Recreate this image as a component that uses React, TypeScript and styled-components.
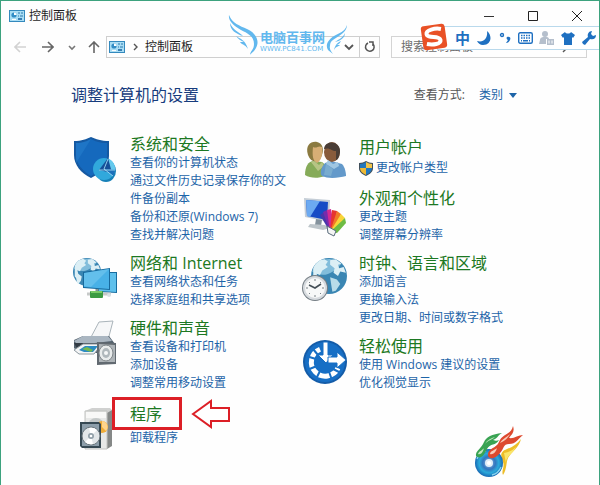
import React from "react";
import styled, { createGlobalStyle } from "styled-components";

const GlobalStyle = createGlobalStyle`
  * { box-sizing: border-box; }
  body {
    margin: 0;
    background: #fff;
    font-family: "Open Sans", "Noto Sans CJK SC", sans-serif;
    font-size: 12px;
    line-height: 18px;
    color: #1f1f1f;
  }
  button, input, select {
    font: inherit;
    color: inherit;
    background: none;
    border: 0;
    padding: 0;
    margin: 0;
  }
  svg { display: block; flex: none; }
`;

const Window = styled.main`
  position: relative;
  min-height: 100vh;
  overflow: hidden;
  background: #fefefe;
  border: solid #3da27e;
  border-width: 1px 1px 0;
`;

const TitleBar = styled.header`
  display: flex;
  align-items: center;
  height: 29px;
  padding-left: 8px;
`;

const WindowTitle = styled.span`
  flex: 1;
  margin-left: 4px;
`;

const WindowButton = styled.button`
  display: grid;
  place-items: center;
  width: 44px;
  height: 28px;
`;

const Toolbar = styled.nav`
  display: flex;
  align-items: center;
  height: 34px;
  padding: 0 12px 0 13px;
`;

const NavButton = styled.button<{ $gap?: number }>`
  display: grid;
  place-items: center;
  height: 20px;
  margin-right: ${(p) => p.$gap ?? 0}px;
`;

const AddressBar = styled.div`
  display: flex;
  align-items: center;
  flex: 1 1 274px;
  height: 22px;
  padding-left: 2px;
  border: 1px solid #cfcfcf;
`;

const Crumb = styled.button`
  flex: 1;
  text-align: left;
`;

const AddressButton = styled.button<{ $divided?: boolean }>`
  display: grid;
  place-items: center;
  width: 20px;
  height: 20px;
  border-left: ${(p) => (p.$divided ? "1px solid #cfcfcf" : "0")};
`;

const SearchBox = styled.label`
  display: flex;
  align-items: center;
  flex: 1 1 196px;
  min-width: 0;
  height: 22px;
  margin-left: 11px;
  padding: 0 12px 0 9px;
  border: 1px solid #d4d4d4;
`;

const SearchInput = styled.input`
  flex: 1;
  min-width: 0;
  outline: none;
  &::placeholder { color: #6d6d6d; opacity: 1; }
`;

const Content = styled.section`
  padding: 19px 70px 20px;
`;

const HeadingRow = styled.div`
  display: flex;
  align-items: center;
  justify-content: space-between;
  height: 24px;
  padding-right: 12px;
  margin-bottom: 28px;
`;

const PageHeading = styled.h1`
  margin: 0;
  font-size: 16px;
  font-weight: 400;
  color: #173c7d;
`;

const ViewBy = styled.div`
  display: flex;
  align-items: center;
  color: #555;
`;

const ViewSelect = styled.select`
  appearance: none;
  margin: 0 5px 0 14px;
  color: #1d64a8;
`;

const Columns = styled.div`
  display: grid;
  grid-template-columns: 1fr 1fr;
`;

const Column = styled.div<{ $top?: number }>`
  display: flex;
  flex-direction: column;
  gap: 10px;
  padding-top: ${(p) => p.$top ?? 0}px;
`;

const Group = styled.article`
  display: flex;
  align-items: flex-start;
  gap: 10px;
  padding: 0 12px 0 1px;
`;

const GroupBody = styled.div`
  flex: 1;
  min-width: 0;
`;

const GroupTitle = styled.h2<{ $marked?: boolean }>`
  position: relative;
  margin: 0;
  padding: ${(p) => (p.$marked ? "3px 0 5px" : "0")};
  font-size: 16px;
  font-weight: 400;
  line-height: 19px;
`;

const TitleLink = styled.a`
  color: #1c7822;
  text-decoration: none;
`;

const Tasks = styled.ul`
  margin: 0;
  padding: 0;
  list-style: none;
`;

const Task = styled.li<{ $shield?: boolean }>`
  display: flex;
  align-items: center;
  gap: 3px;
  min-height: ${(p) => (p.$shield ? 22 : 18)}px;
`;

const TaskLink = styled.a`
  color: #1d64a8;
  text-decoration: none;
`;

const Highlight = styled.span`
  position: absolute;
  left: -18px;
  top: -5px;
  width: 70px;
  height: 33px;
  border: 3px solid #dc1f26;
  pointer-events: none;
`;

const Pointer = styled.span`
  position: absolute;
  left: 61px;
  top: -4px;
`;

const Watermark = styled.div`
  position: absolute;
  left: 226px;
  top: 13px;
  display: flex;
  color: #62b8ee;
  pointer-events: none;
`;

const WatermarkText = styled.div`
  margin-top: 16px;
  width: 66px;
`;

const WatermarkName = styled.div`
  font-size: 13px;
  font-weight: 700;
  line-height: 15px;
  white-space: nowrap;
`;

const WatermarkUrl = styled.div`
  font-family: "DejaVu Sans", sans-serif;
  font-size: 7px;
  line-height: 8px;
  white-space: nowrap;
`;

const WatermarkWing = styled.div`
  margin-top: 10px;
`;

const ImeBar = styled.div`
  position: absolute;
  top: 25px;
  right: -1px;
  display: flex;
  align-items: center;
  height: 24px;
  padding: 0 1px 0 14px;
  background: #fff;
  border: 1px solid #b9d9ec;
  border-right: 0;
`;

const ImeLogo = styled.span`
  position: absolute;
  left: -18px;
  top: -4px;
`;

const ImeButton = styled.button`
  display: grid;
  place-items: center;
  width: 21px;
  height: 22px;
  color: #1f70c1;
  font-size: 15px;
  font-weight: 700;
  line-height: 22px;
`;

const FlameLogo = styled.div`
  position: absolute;
  right: 75px;
  bottom: 7px;
`;

const PanelIcon = () => (
  <svg width="16" height="12" viewBox="0 0 16 12">
    <rect width="16" height="12" fill="#3489bd" />
    <rect x="1" y="1" width="14" height="10" fill="#a9ddf4" />
    <circle cx="5" cy="5" r="2.6" fill="#338dc5" />
    <path d="M5 5V2.4A2.6 2.6 0 0 1 7.6 5z" fill="#fff" />
    <path d="M9 3h2M12 3h2M9 6h1M11 6h3" stroke="#2b78ad" />
    <path d="M3 9.5h4" stroke="#fff" />
    <rect x="9" y="8" width="4" height="2" fill="#387eb2" />
  </svg>
);

const Arrow = ({ d, color, w = 12 }: { d: string; color: string; w?: number }) => (
  <svg width={w} height="12" viewBox={`0 0 ${w} 12`} fill="none" stroke={color} strokeWidth="1.6">
    <path d={d} />
  </svg>
);

const ShieldIcon = () => (
  <svg width="48" height="48" viewBox="0 0 48 48">
    <path d="M2 6c8 0 12-2 17-4 5 2 10 4 18 4v15c0 10-8 17-18 22C9 38 2 30 2 20z" fill="#1559a2" />
    <path d="M4 8c7 0 11-2 15-4 4 2 8 4 16 4v13c0 9-7 15-16 20C11 36 4 29 4 20z" fill="#1569bd" />
    <path d="M4 8c7 0 11-2 15-4L4 28z" fill="#2781d0" opacity=".5" />
    <ellipse cx="34" cy="36" rx="10" ry="11" fill="#1680b7" />
    <circle cx="32" cy="34" r="11" fill="#31a8dc" />
    <path d="M32 34l5-10a11 11 0 0 1 6 10z" fill="#65c9ed" />
    <path d="M27 35l9-12 4 15z" fill="#164f99" />
    <path d="M32 34l11 1a11 11 0 0 1-2 6z" fill="#1d70ba" />
    <path d="M32 34l4-10M27 35l16 0M32 34l9 7" stroke="#b4e8fb" strokeWidth=".8" />
  </svg>
);

const Globe = ({ cx, cy, r }: { cx: number; cy: number; r: number }) => (
  <g transform={`translate(${cx} ${cy}) scale(${r / 16})`}>
    <circle r="16" fill="#3a86b3" />
    <path d="M-15-4A16 16 0 0 1 11-11C3-2-4 2-15-4z" fill="#82bddb" />
    <path d="M-14-7c2-5 6-8 10-8l3 2-2 3 2 2-5 3-2 4-3-1 1 4 4 3-1 5-3 4c-3-4-1-7-4-9zM1-14l5-1 5 4-3 1 1 3 4-1 2 5-5-1-2 4-4-3 1-4-4-3z" fill="#dceff5" />
    <path d="M1 1l6 2 3 4-4 6-3 1-1-6z" fill="#b9dce9" />
  </g>
);

const NetworkIcon = () => (
  <svg width="48" height="48" viewBox="0 0 48 48">
    <Globe cx={15} cy={18} r={14} />
    <path d="M26 18l19 0v21l-19-1z" fill="#176c9f" />
    <path d="M27 19l17 0v19l-17-1z" fill="#5ec0ec" />
    <path d="M11 18l27-4v22l-27-2z" fill="#17699d" />
    <path d="M12 19l25-4v20l-25-2z" fill="#48b1e7" />
    <path d="M12 19l25-4-18 18-7-1z" fill="#7acbf1" opacity=".55" />
    <path d="M15 40h24" stroke="#c6c9c8" strokeWidth="3" />
    <path d="M25 35v3" stroke="#839696" strokeWidth="3" />
    <rect x="18" y="37" width="13" height="7" rx="1" fill="#3b9b42" />
    <path d="M19 38h11" stroke="#8fda75" strokeWidth="1.5" />
    <circle cx="37" cy="41" r="2" fill="#d8e0e4" />
  </svg>
);

const HardwareIcon = () => (
  <svg width="48" height="48" viewBox="0 0 48 48">
    <path d="M18 20l9-17 14-1-5 19z" fill="#f6f7f8" stroke="#aab4ba" />
    <path d="M2 21l9-4h26l6 8v9H7l-5-5z" fill="#53616d" />
    <path d="M2 22l9-5h25l4 5-34 4z" fill="#aab6c1" />
    <path d="M2 24h39v7H6z" fill="#323b44" />
    <path d="M2 31l9-6h19l-8 10H7z" fill="#f4f5f6" stroke="#8c989f" />
    <path d="M7 31l6-4h13l-5 6h-9z" fill="#2c8bc2" />
    <path d="M10 30l5-2 6 3-2 2z" fill="#75b94e" />
    <path d="M25 23l19 1v21l-19 1z" fill="#616970" />
    <path d="M27 25l16 1v17H27z" fill="#aeb4b8" />
    <ellipse cx="34" cy="34" rx="7" ry="8" fill="#e9ecec" stroke="#7c8387" />
    <ellipse cx="34" cy="34" rx="4" ry="5" fill="#b0b8bc" />
    <circle cx="34" cy="34" r="2" fill="#f7f8f8" />
  </svg>
);

const ProgramsIcon = () => (
  <svg width="48" height="48" viewBox="0 0 48 48">
    <path d="M13 9l7-3h18l2 2-5 4z" fill="#d0d1d0" />
    <path d="M35 11l5-3v36l-5 3z" fill="#858887" />
    <path d="M13 9h22v38H13z" fill="#e7e8e7" stroke="#c1c2c0" />
    <path d="M14 10h20v6H14z" fill="#f8f8f7" />
    <circle cx="24" cy="24" r="8" fill="#c4c8c8" />
    <circle cx="30" cy="25" r="6" fill="#efac38" />
    <path d="M30 19a6 6 0 0 1 4 10l-4-4z" fill="#ffd58d" />
    <path d="M8 20h19l2 2v24H10l-2-2z" fill="#374953" />
    <path d="M10 22h17v22H10z" fill="#8d9eaa" />
    <circle cx="19" cy="34" r="9" fill="#e3e7e9" stroke="#6b767c" />
    <path d="M19 34l-2-8a9 9 0 0 1 8 2zM19 34l2 8a9 9 0 0 1-8-2z" fill="#fff" />
    <circle cx="19" cy="34" r="3" fill="#919fa8" />
    <circle cx="19" cy="34" r="1.3" fill="#fff" />
  </svg>
);

const UsersIcon = () => (
  <svg width="48" height="40" viewBox="0 0 48 40">
    <path d="M4 37c0-8 3-14 9-14l8 1 6 5-3 9c-8 3-15 2-20-1z" fill="#86ab59" />
    <path d="M7 17C4 7 10 3 16 4c6 1 7 8 5 13-2 7-10 10-14 0z" fill="#8b7a40" />
    <path d="M12 9c4 2 5-2 9 0 1 8-1 14-5 16-4-2-5-7-4-16z" fill="#d7ae75" />
    <path d="M13 23l5 4 3-3 2 4-6 5-7-9z" fill="#b6c485" />
    <path d="M21 38c-3-3 0-10 3-13l6-2 11 3c3 3 4 9 4 12-7 2-18 3-24 0z" fill="#6399ca" />
    <ellipse cx="31" cy="14" rx="8" ry="10" fill="#885b3b" />
    <path d="M23 11C24 1 40 3 39 14c-1 7-3 8-4 8v-9c-5 0-6-4-12-2z" fill="#4a3d35" />
    <path d="M27 22l5 4 5-2 1 4-5 3-8-5z" fill="#9fc6e2" />
    <path d="M25 26l7 5-2 7-7-1z" fill="#79accf" />
  </svg>
);

const AppearanceIcon = () => (
  <svg width="48" height="48" viewBox="0 0 48 48">
    <path d="M3 9l26 2-1 22-24-5z" fill="#c5ced7" />
    <path d="M5 11l22 2-1 18-20-4z" fill="#174bc5" />
    <path d="M5 11l14 1-10 16-3-1z" fill="#6caaf1" />
    <path d="M15 30l6 1-1 6-6-1z" fill="#84929d" />
    <path d="M9 35l15 1 5 3-7 2-15-3z" fill="#bdc5ca" />
    <path d="M29 43l-10-17 4-3 11 17z" fill="#4736aa" />
    <path d="M29 43l-7-20 4-2 9 20z" fill="#762bac" />
    <path d="M29 43l-3-22 4-1 4 22z" fill="#d22a93" />
    <path d="M29 43l2-22 5 1-2 21z" fill="#e6352f" />
    <path d="M29 43l7-21 4 3-5 18z" fill="#f17927" />
    <path d="M29 43l11-18 4 4-8 14z" fill="#f8d538" />
    <path d="M29 43l15-14 1 5-9 10z" fill="#6ebc44" />
    <path d="M26 37l9 5-2 5-6-3z" fill="#f5f5f4" stroke="#596b7c" />
  </svg>
);

const ClockIcon = () => (
  <svg width="48" height="48" viewBox="0 0 48 48">
    <Globe cx={28} cy={22} r={18} />
    <circle cx="14" cy="34" r="13" fill="#747d84" />
    <circle cx="14" cy="34" r="12" fill="#d6dade" />
    <circle cx="14" cy="34" r="10" fill="#f7f8f8" />
    <path d="M14 25v2M14 41v2M5 34h2M21 34h2M8 28l1 1M20 28l-1 1M8 40l1-1M20 40l-1-1" stroke="#788187" />
    <path d="M8 31l6 3 6-4" fill="none" stroke="#444e56" strokeWidth="1.6" />
  </svg>
);

const EaseIcon = () => (
  <svg width="48" height="48" viewBox="0 0 48 48">
    <circle cx="24" cy="25" r="22" fill="#145ca8" />
    <circle cx="24" cy="25" r="20" fill="#176fc5" />
    <path d="M19 12.200a14 14 0 1 0 18 19" fill="none" stroke="#fff" strokeWidth="5" />
    <path d="M5 19l10 3M6 33l10-4M15 42l5-10M31 43l-4-11M40 36l-8-4M12 12l5 6" stroke="#176fc5" strokeWidth="2" />
    <path d="M22 5h5v13h5l-7 8-8-8h5z" fill="#fff" stroke="#176fc5" />
    <path d="M27 20h9v-5l9 8-9 8v-5h-9z" fill="#fff" stroke="#176fc5" />
  </svg>
);

const UacShield = () => (
  <svg width="14" height="15" viewBox="0 0 14 15">
    <path d="M0 2c3 0 5-1 7-2 2 1 4 2 7 2v5c0 4-3 6-7 8-4-2-7-4-7-8z" fill="#3f4e5a" />
    <path d="M1 3c2 0 4-1 6-2v6H1z" fill="#2277be" />
    <path d="M7 1c2 1 4 2 6 2v4H7z" fill="#f2c449" />
    <path d="M1 7h6v7C3 12 1 10 1 7z" fill="#edb935" />
    <path d="M7 7h6c0 3-2 5-6 7z" fill="#2277be" />
  </svg>
);

const LeftWing = () => (
  <svg width="33" height="42" viewBox="0 0 33 42" fill="currentColor">
    <path d="M2 1c3 8 11 11 18 14 9 4 13 12 9 19-2 4-5 5-6 7 0-4 4-5 4-11 0-8-7-11-13-14C7 12 1 7 2 1z" />
    <path d="M3 9c3 7 9 9 13 13C9 20 3 16 3 9zM9 22c4 3 9 3 12 13-3-5-6-4-8-7h4c-3-1-6-3-8-6z" />
  </svg>
);

const RightWing = () => (
  <svg width="23" height="32" viewBox="0 0 23 32" fill="currentColor">
    <path d="M21 1c-2 7-8 8-13 11-6 4-9 9-6 14l5 4c-1-2-4-4-3-8 0-6 5-7 9-10 5-3 8-7 8-11z" />
    <path d="M19 9c-2 5-6 6-10 9 5-1 10-4 10-9zM15 17c-3 1-6 4-7 9 2-4 4-3 6-5h-3c2-1 3-2 4-4z" />
  </svg>
);

const SogouLogo = () => (
  <svg width="28" height="28" viewBox="0 0 28 28">
    <g transform="rotate(-8 14 14)">
      <rect x="2" y="2" width="24" height="24" rx="3" fill="#e95126" />
      <path d="M22 7C16 5 7 6 7 10c0 5 13 3 13 8 0 4-8 4-14 2" fill="none" stroke="#fff" strokeWidth="4" />
    </g>
  </svg>
);

const MoonIcon = () => (
  <svg width="14" height="14" viewBox="0 0 14 14">
    <path d="M10 0c6 5 4 14-4 14-3 0-5-2-6-4 7 2 11-3 10-10z" fill="currentColor" />
  </svg>
);
const PunctuationIcon = () => (
  <svg width="12" height="12" viewBox="0 0 12 12">
    <circle cx="3" cy="3" r="1.5" fill="none" stroke="currentColor" strokeWidth="1.4" />
    <path d="M8 5c3-1 4 1 3 3-1 2-2 3-4 3l2-3c-1 0-2-2-1-3z" fill="currentColor" />
  </svg>
);
const KeyboardIcon = () => (
  <svg width="15" height="12" viewBox="0 0 15 12" fill="none" stroke="currentColor">
    <rect x=".7" y=".7" width="13.6" height="10.6" rx="1.5" strokeWidth="1.4" />
    <path d="M3 3.500h10M3 6h10" strokeWidth="1.4" strokeDasharray="1.5 1" />
    <path d="M3 8.700h1M5 8.700h5M11 8.700h1" strokeWidth="1.4" />
  </svg>
);
const PersonIcon = () => (
  <svg width="15" height="15" viewBox="0 0 15 15" fill="#b5bfcc">
    <circle cx="6" cy="3" r="3" />
    <path d="M1 9c0-4 9-4 9-1H7v5H0z" />
    <path d="M8 8h7v6H8z" />
    <path d="M9.500 9.500h1v3h-1zM12.500 9.500h1v3h-1z" fill="#fff" />
  </svg>
);
const ShirtIcon = () => (
  <svg width="14" height="13" viewBox="0 0 14 13">
    <path d="M4 0c1 2 5 2 6 0l4 3-2 3-1-1v8H3V5L2 6 0 3z" fill="currentColor" />
  </svg>
);
const WrenchIcon = () => (
  <svg width="14" height="14" viewBox="0 0 14 14">
    <path d="M10 0L9 3l2 2 3-1c0 4-3 5-6 4l-5 6-2-1-1-2 6-5C5 3 7 0 10 0z" fill="currentColor" />
  </svg>
);

const FlameDisc = () => (
  <svg width="50" height="52" viewBox="0 0 50 52">
    <defs>
      <radialGradient id="disc">
        <stop offset="0" stopColor="#9fc6ec" />
        <stop offset=".45" stopColor="#3275be" />
        <stop offset=".7" stopColor="#2baadb" />
        <stop offset="1" stopColor="#1769b4" />
      </radialGradient>
    </defs>
    <path d="M47 13c-2 9-9 12-13 19-2 4-1 11-5 17-2-4 2-8 0-13-2-5-4-10 4-13 6-2 10-5 14-10z" fill="#edbd28" />
    <path d="M30 27c6-1 9-3 12-6-4 8-10 9-10 16z" fill="#fae66b" />
    <circle cx="15" cy="37" r="14" fill="url(#disc)" />
    <path d="M3 33a13 13 0 0 1 9-8M27 41a13 13 0 0 1-9 8" fill="none" stroke="#88d3ed" strokeWidth="1.3" />
    <circle cx="15" cy="37" r="4" fill="#e0edf7" />
    <circle cx="15" cy="37" r="2" fill="#fff" />
    <path d="M2 30C1 25 8 22 10 16c2-5 8-8 18-9-5 3-4 5-9 7 3 1 4 1 6 0-3 6-9 3-12 9-3 6-6 11-11 7z" fill="#39a353" />
    <path d="M4 28c1-3 5-4 6-6-1 4-3 7-6 6zM11 18c2-4 6-6 10-7-3 3-7 3-10 7z" fill="#c4e8c0" />
    <path d="M14 30c-1-8 8-7 11-14 3-8 12-7 14-16 2 6-1 8-4 12 5 1 9-3 14-3-5 4-7 9-14 9-6 0-5 5-9 9-3 4-9 8-12 3z" fill="#dd492e" />
    <path d="M16 28c0-3 5-4 7-6-1 4-4 7-7 6zM26 17c2-4 6-5 10-9-2 4-5 7-10 9z" fill="#f8cbb8" />
  </svg>
);

type GroupData = {
  title: string;
  icon: React.ReactNode;
  tasks: string[];
  shield?: boolean;
  marked?: boolean;
};

const leftGroups: GroupData[] = [
  { title: "系统和安全", icon: <ShieldIcon />, tasks: ["查看你的计算机状态", "通过文件历史记录保存你的文件备份副本", "备份和还原(Windows 7)", "查找并解决问题"] },
  { title: "网络和 Internet", icon: <NetworkIcon />, tasks: ["查看网络状态和任务", "选择家庭组和共享选项"] },
  { title: "硬件和声音", icon: <HardwareIcon />, tasks: ["查看设备和打印机", "添加设备", "调整常用移动设置"] },
  { title: "程序", icon: <ProgramsIcon />, tasks: ["卸载程序"], marked: true },
];

const rightGroups: GroupData[] = [
  { title: "用户帐户", icon: <UsersIcon />, tasks: ["更改帐户类型"], shield: true },
  { title: "外观和个性化", icon: <AppearanceIcon />, tasks: ["更改主题", "调整屏幕分辨率"] },
  { title: "时钟、语言和区域", icon: <ClockIcon />, tasks: ["添加语言", "更换输入法", "更改日期、时间或数字格式"] },
  { title: "轻松使用", icon: <EaseIcon />, tasks: ["使用 Windows 建议的设置", "优化视觉显示"] },
];

const CategoryGroup = ({ title, icon, tasks, shield, marked }: GroupData) => (
  <Group>
    {icon}
    <GroupBody>
      <GroupTitle $marked={marked}>
        <TitleLink href="#">{title}</TitleLink>
        {marked && (
          <>
            <Highlight />
            <Pointer>
              <svg width="40" height="32" viewBox="0 0 40 32">
                <path d="M2 16L20 3v7h18v13H20v6z" fill="#fff" stroke="#dc1f26" strokeWidth="2" />
              </svg>
            </Pointer>
          </>
        )}
      </GroupTitle>
      <Tasks>
        {tasks.map((task) => (
          <Task key={task} $shield={shield}>
            {shield && <UacShield />}
            <TaskLink href="#">{task}</TaskLink>
          </Task>
        ))}
      </Tasks>
    </GroupBody>
  </Group>
);

export default function App() {
  return (
    <>
      <GlobalStyle />
      <Window>
        <TitleBar>
          <PanelIcon />
          <WindowTitle>控制面板</WindowTitle>
          <WindowButton aria-label="最小化">
            <svg width="10" height="10" viewBox="0 0 10 10"><path d="M0 5.500h10" stroke="#333" /></svg>
          </WindowButton>
          <WindowButton aria-label="最大化">
            <svg width="10" height="10" viewBox="0 0 10 10"><path d="M.5.5h9v9h-9z" fill="none" stroke="#222" /></svg>
          </WindowButton>
          <WindowButton aria-label="关闭">
            <svg width="10" height="10" viewBox="0 0 10 10"><path d="M0 0l10 10M10 0L0 10" stroke="#222" /></svg>
          </WindowButton>
        </TitleBar>

        <Toolbar>
          <NavButton aria-label="后退" $gap={16}><Arrow d="M12 6H1M6 1L1 6l5 5" color="#d2d2d2" /></NavButton>
          <NavButton aria-label="前进" $gap={14}><Arrow d="M0 6h11M6 1l5 5-5 5" color="#666" /></NavButton>
          <NavButton aria-label="最近" $gap={12}><Arrow d="M1 5l3 3 3-3" color="#777" w={8} /></NavButton>
          <NavButton aria-label="上移" $gap={6}><Arrow d="M6 12V1M1 6l5-5 5 5" color="#666" /></NavButton>
          <AddressBar>
            <PanelIcon />
            <svg width="20" height="10" viewBox="0 0 20 10"><path d="M9 2l3 3-3 3" fill="none" stroke="#555" strokeWidth="1.4" /></svg>
            <Crumb>控制面板</Crumb>
            <AddressButton aria-label="历史">
              <svg width="10" height="8" viewBox="0 0 10 8"><path d="M1 2l4 4 4-4" fill="none" stroke="#555" strokeWidth="1.8" /></svg>
            </AddressButton>
            <AddressButton aria-label="刷新" $divided>
              <svg width="12" height="12" viewBox="0 0 12 12" fill="none" stroke="#555" strokeWidth="1.5">
                <path d="M9 3a4.300 4.300 0 1 1-5-1" /><path d="M5 1h4v4" />
              </svg>
            </AddressButton>
          </AddressBar>
          <SearchBox>
            <SearchInput type="search" aria-label="搜索控制面板" placeholder="搜索控制面板" />
            <svg width="12" height="12" viewBox="0 0 12 12" fill="none" stroke="#555" strokeWidth="1.5">
              <circle cx="7.5" cy="4.5" r="3.5" /><path d="M5 7l-4 4" />
            </svg>
          </SearchBox>
        </Toolbar>

        <Content>
          <HeadingRow>
            <PageHeading>调整计算机的设置</PageHeading>
            <ViewBy>
              <label htmlFor="view">查看方式:</label>
              <ViewSelect id="view"><option>类别</option></ViewSelect>
              <svg width="8" height="5" viewBox="0 0 8 5"><path d="M0 0h8L4 5z" fill="#1d64a8" /></svg>
            </ViewBy>
          </HeadingRow>
          <Columns>
            <Column>{leftGroups.map((g) => <CategoryGroup key={g.title} {...g} />)}</Column>
            <Column $top={3}>{rightGroups.map((g) => <CategoryGroup key={g.title} {...g} />)}</Column>
          </Columns>
        </Content>

        <Watermark>
          <LeftWing />
          <WatermarkText>
            <WatermarkName>电脑百事网</WatermarkName>
            <WatermarkUrl>WWW.PC841.COM</WatermarkUrl>
          </WatermarkText>
          <WatermarkWing><RightWing /></WatermarkWing>
        </Watermark>

        <ImeBar>
          <ImeLogo><SogouLogo /></ImeLogo>
          <ImeButton aria-label="中文">中</ImeButton>
          <ImeButton aria-label="半角"><MoonIcon /></ImeButton>
          <ImeButton aria-label="标点"><PunctuationIcon /></ImeButton>
          <ImeButton aria-label="键盘"><KeyboardIcon /></ImeButton>
          <ImeButton aria-label="用户"><PersonIcon /></ImeButton>
          <ImeButton aria-label="皮肤"><ShirtIcon /></ImeButton>
          <ImeButton aria-label="工具"><WrenchIcon /></ImeButton>
        </ImeBar>

        <FlameLogo><FlameDisc /></FlameLogo>
      </Window>
    </>
  );
}
